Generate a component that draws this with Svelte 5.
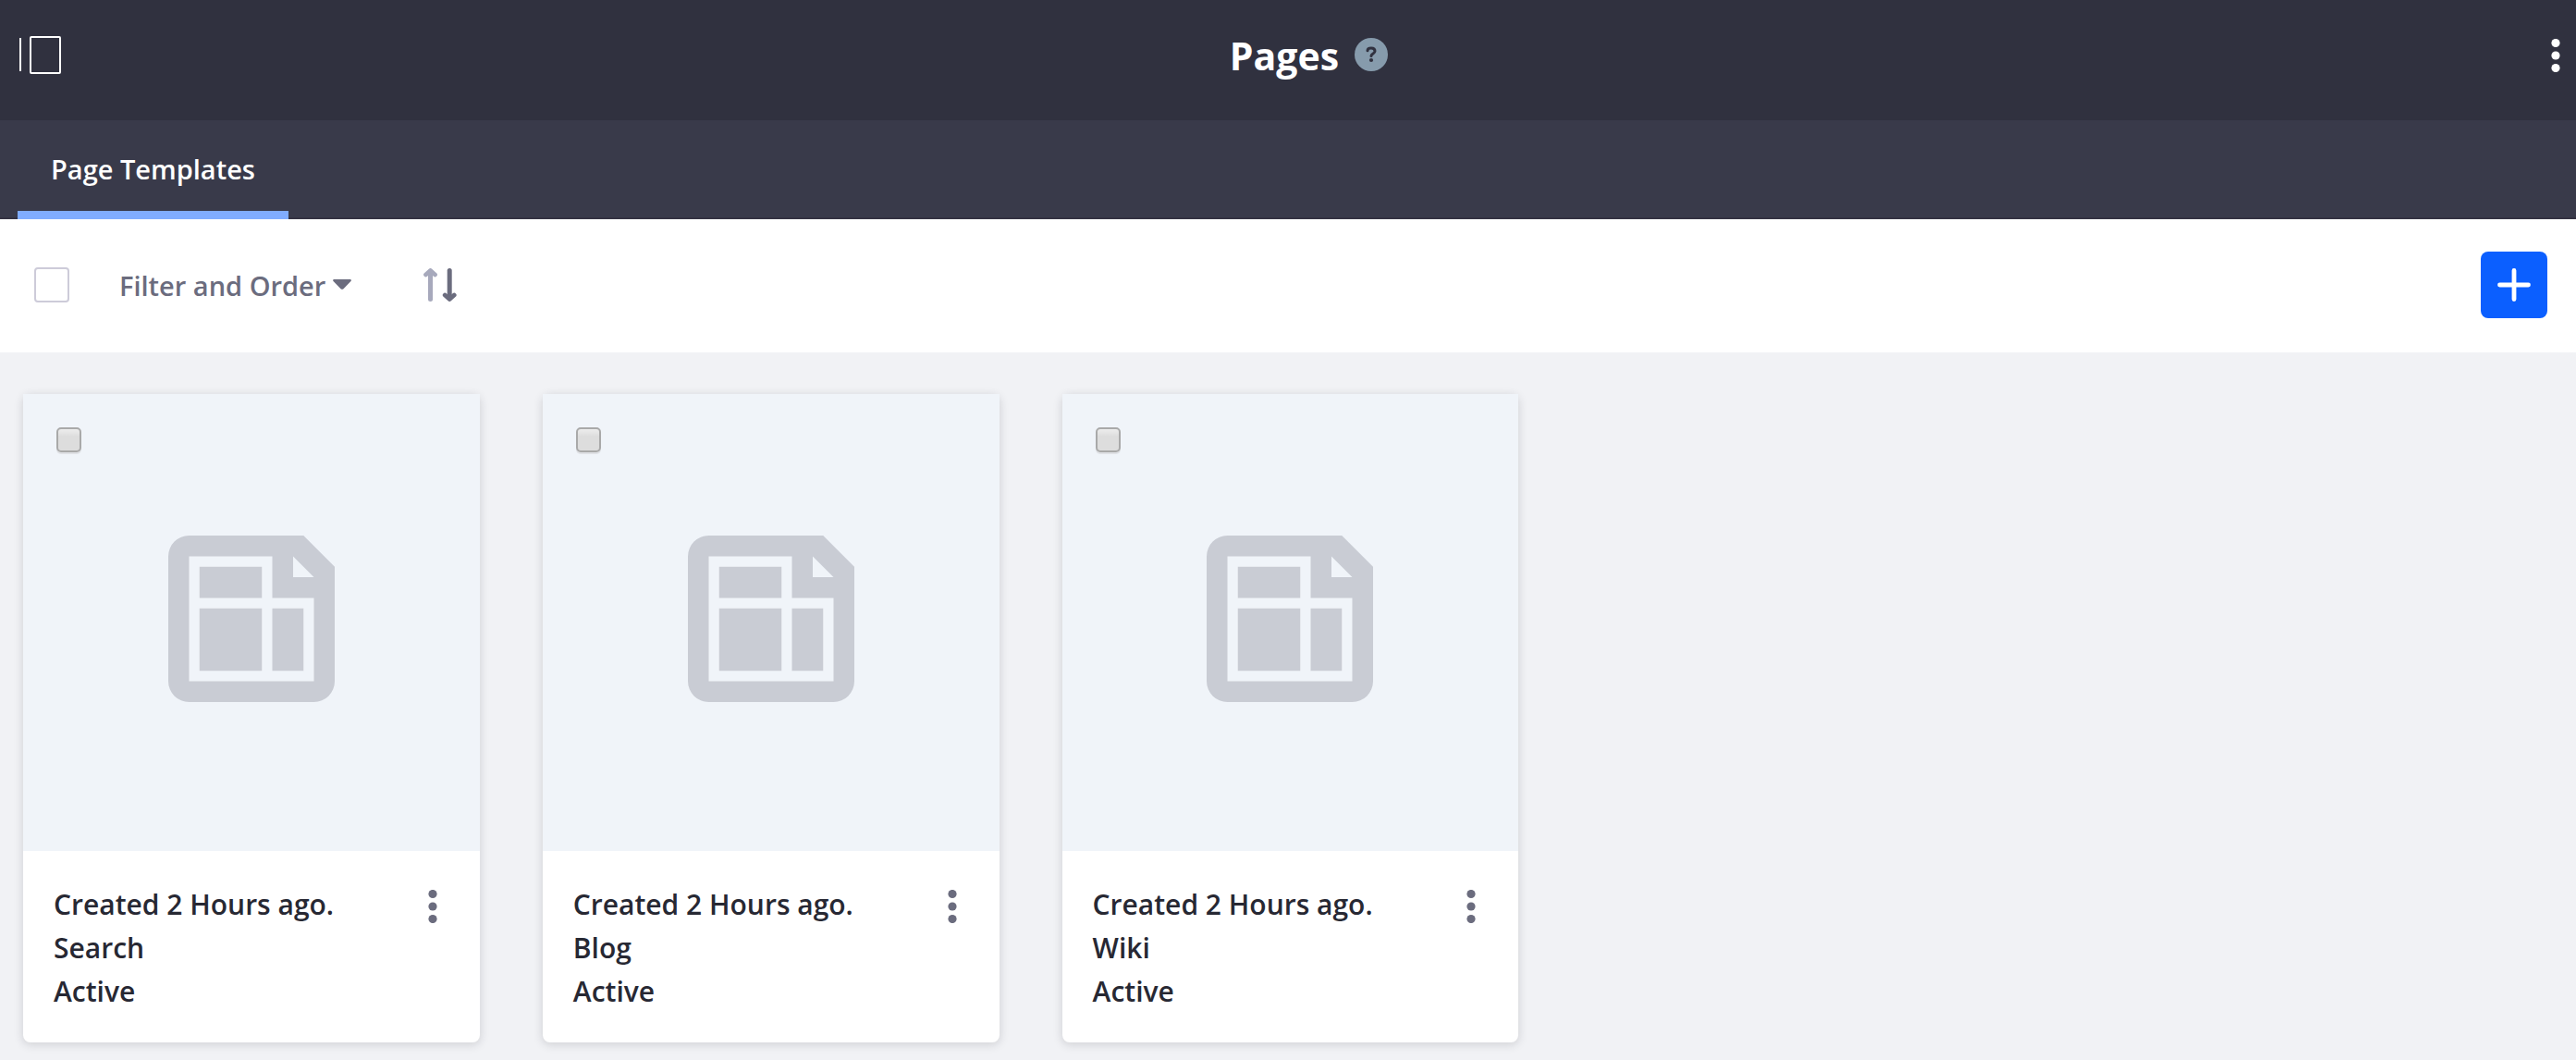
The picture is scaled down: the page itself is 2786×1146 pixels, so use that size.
<script>
  const templates = [{ name: 'Search' }, { name: 'Blog' }, { name: 'Wiki' }];
</script>

{#snippet kebab()}
  <svg class="kebab" viewBox="0 0 36 36" aria-hidden="true">
    <circle cx="18" cy="4.5" r="4.6" />
    <circle cx="18" cy="18" r="4.6" />
    <circle cx="18" cy="31.5" r="4.6" />
  </svg>
{/snippet}

<div class="page">
  <header class="topbar">
    <button class="plain toggle" aria-label="Toggle menu">
      <svg width="46" height="42" viewBox="0 0 46 42" aria-hidden="true">
        <path d="M1 2v36" fill="none" stroke="#fff" stroke-width="2" />
        <rect x="12" y="1" width="32" height="39" rx="1" fill="none" stroke="#fff" stroke-width="2" />
      </svg>
    </button>
    <div class="heading">
      <h1>Pages</h1>
      <button class="plain help" aria-label="Help">
        <svg width="36" height="36" viewBox="0 0 36 36" aria-hidden="true">
          <circle cx="18" cy="18" r="18" fill="#869bac" />
          <path d="M14 13.800C14 11.600 15.700 11 18 11c2.400 0 4 1.300 4 3.200 0 2.800-4 2.600-4 5.400" fill="none" stroke="#30313f" stroke-width="3" stroke-linecap="round" />
          <circle cx="18" cy="24" r="2.100" fill="#30313f" />
        </svg>
      </button>
    </div>
    <button class="plain options" aria-label="Options">{@render kebab()}</button>
  </header>

  <nav class="tabs">
    <a class="tab" href="#templates" aria-current="page">Page Templates</a>
  </nav>

  <div class="toolbar">
    <input class="select-all" type="checkbox" aria-label="Select all" />
    <button class="plain filter">
      Filter and Order
      <svg width="20" height="12" viewBox="0 0 20 12" aria-hidden="true">
        <path d="M1 0h18q1.500.5.5 2l-8 8.200q-1.500 1.300-3 0L.5 2Q-.5.5 1 0z" fill="currentColor" />
      </svg>
    </button>
    <button class="plain sort" aria-label="Reverse sort direction">
      <svg width="36" height="36" viewBox="0 0 36 36" fill="none" stroke-width="5" stroke-linecap="round" stroke-linejoin="round" aria-hidden="true">
        <g stroke="#a7a9bc" fill="#a7a9bc"><path d="M7.500 4v29.500" /><path d="M2.500 7l5-4.500 5 4.500" stroke-width="4.800" /></g>
        <g stroke="#6b6c7e" fill="#6b6c7e"><path d="M28.200 2.500v29" /><path d="M23.200 29l5 4.500 5-4.500" stroke-width="4.800" /></g>
      </svg>
    </button>
    <button class="plain add" aria-label="Add">
      <svg width="36" height="36" viewBox="0 0 36 36" aria-hidden="true">
        <path d="M18 2.500v31M2.500 18h31" stroke="#fff" stroke-width="4.800" stroke-linecap="round" />
      </svg>
    </button>
  </div>

  <main class="cards">
    {#each templates as template}
      <article class="card">
        <div class="preview">
          <input class="pick" type="checkbox" aria-label={`Select ${template.name}`} />
          <svg width="180" height="180" viewBox="0 0 16 16" aria-hidden="true">
            <path fill="#c9ccd4" fill-rule="evenodd" d="M2 0h11l3 3v11a2 2 0 0 1-2 2H2a2 2 0 0 1-2-2V2a2 2 0 0 1 2-2zM2 2v12h12V6h-4V2zM12 2v2h2z" />
            <path fill="#c9ccd4" d="M3 3h6v3H3zM3 7h6v6H3zM10 7h3v6h-3z" />
          </svg>
        </div>
        <div class="details">
          <div class="text">
            <p>Created 2 Hours ago.</p>
            <p>{template.name}</p>
            <p>Active</p>
          </div>
          <button class="plain" aria-label={`${template.name} actions`}>{@render kebab()}</button>
        </div>
      </article>
    {/each}
  </main>
</div>

<style>
  :global(body) {
    background: #f1f2f5;
  }
  .page {
    min-height: 100vh;
    box-sizing: border-box;
    background: #f1f2f5;
    color: #272833;
    font: 600 30px/47px 'Open Sans', 'Noto Sans', sans-serif;
  }
  .plain {
    display: flex;
    align-items: center;
    padding: 0;
    border: 0;
    background: none;
    color: #6b6c7e;
    font: inherit;
    cursor: pointer;
  }
  svg {
    display: block;
    flex: none;
  }
  .kebab {
    width: 36px;
    height: 36px;
    fill: currentColor;
  }
  .topbar {
    display: grid;
    grid-template-columns: 1fr auto 1fr;
    align-items: center;
    height: 120px;
    padding: 0 4px 10px 21px;
    background: #30313f;
  }
  .toggle {
    justify-self: start;
  }
  .heading {
    display: flex;
    align-items: center;
    gap: 17px;
    padding-left: 28px;
  }
  .help {
    padding-bottom: 2px;
  }
  h1 {
    margin: 0;
    color: #fff;
    font-size: 41px;
    line-height: 60px;
    font-weight: 700;
  }
  .options {
    justify-self: end;
    color: #fff;
  }
  .tabs {
    display: flex;
    height: 107px;
    padding-left: 19px;
    background: #393a4a;
    box-shadow: inset 0 -2px #343242;
  }
  .tab {
    display: flex;
    align-items: center;
    padding: 6px 36px 0;
    border-bottom: 9px solid #80acff;
    color: #fff;
    font-size: 29px;
    text-decoration: none;
  }
  .toolbar {
    display: flex;
    align-items: center;
    height: 144px;
    padding: 0 31px 2px 37px;
    box-sizing: border-box;
    background: #fff;
  }
  .select-all,
  .pick {
    appearance: none;
    box-sizing: border-box;
    margin: 0;
  }
  .select-all {
    width: 38px;
    height: 38px;
    border: 2px solid #cdcbd9;
    border-radius: 4px;
    background: #fff;
  }
  .filter {
    gap: 8px;
    margin-left: 54px;
    font-size: 29px;
  }
  .sort {
    margin-left: 78px;
  }
  .add {
    justify-content: center;
    width: 72px;
    height: 72px;
    margin-left: auto;
    border-radius: 8px;
    background: #0b5fff;
  }
  .cards {
    display: grid;
    grid-template-columns: repeat(5, 1fr);
    gap: 68px;
    padding: 45px 20px 19px 25px;
  }
  .card {
    border-radius: 8px;
    background: #fff;
    box-shadow: 0 2px 10px 1px rgba(39, 40, 51, 0.15);
  }
  .preview {
    position: relative;
    display: flex;
    align-items: center;
    justify-content: center;
    aspect-ratio: 1;
    box-sizing: border-box;
    padding-bottom: 7px;
    background: #f0f4f9;
  }
  .pick {
    position: absolute;
    top: 36px;
    left: 36px;
    width: 27px;
    height: 27px;
    border: 2px solid #a9a9a9;
    border-radius: 5px;
    background: linear-gradient(#ededed, #dddddd 35%, #dddddd);
    box-shadow: 0 2px #dfe1e5;
  }
  .details {
    display: flex;
    align-items: flex-start;
    justify-content: space-between;
    padding: 34px 33px 32px 33px;
  }
  .details .plain {
    padding-top: 8px;
  }
  p {
    margin: 0;
  }
</style>
